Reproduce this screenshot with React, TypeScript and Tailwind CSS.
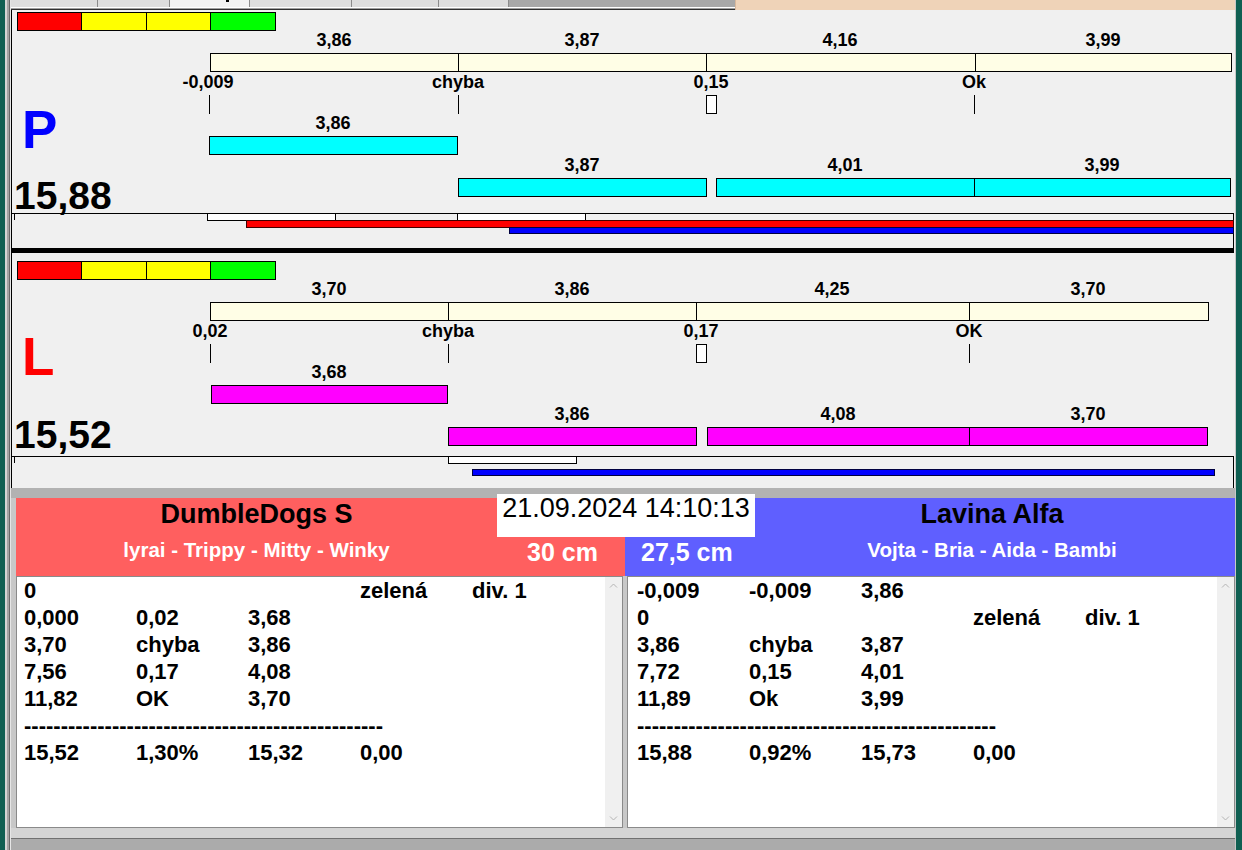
import React from 'react';

// page x of the chart canvas' left padding edge
const OX = 12;

type Rect = { x1: number; x2: number; y1: number; y2: number; cls: string };
type Lbl = { cx: number; cy: number; t: string };

const CREAM = 'bg-[#fffee6] border border-black';
const CYAN = 'bg-[#00ffff] border border-black';
const MAGENTA = 'bg-[#ff00ff] border border-black';
const LINE = 'bg-black';
const TICKBOX = 'bg-white border border-black';

const colourBar = (y1: number, y2: number): Rect[] => [
  { x1: 17, x2: 81, y1, y2, cls: 'bg-[#ff0000] border border-black' },
  { x1: 81, x2: 146, y1, y2, cls: 'bg-[#ffff00] border border-black' },
  { x1: 146, x2: 210, y1, y2, cls: 'bg-[#ffff00] border border-black' },
  { x1: 210, x2: 275, y1, y2, cls: 'bg-[#00ff00] border border-black' },
];

const pRects: Rect[] = [
  ...colourBar(12, 30),
  { x1: 210, x2: 458, y1: 53, y2: 71, cls: CREAM },
  { x1: 458, x2: 706, y1: 53, y2: 71, cls: CREAM },
  { x1: 706, x2: 975, y1: 53, y2: 71, cls: CREAM },
  { x1: 975, x2: 1231, y1: 53, y2: 71, cls: CREAM },
  { x1: 209, x2: 209, y1: 95, y2: 113, cls: LINE },
  { x1: 458, x2: 458, y1: 95, y2: 113, cls: LINE },
  { x1: 974, x2: 974, y1: 95, y2: 113, cls: LINE },
  { x1: 706, x2: 716, y1: 95, y2: 113, cls: TICKBOX },
  { x1: 209, x2: 457, y1: 136, y2: 154, cls: CYAN },
  { x1: 458, x2: 706, y1: 178, y2: 196, cls: CYAN },
  { x1: 716, x2: 974, y1: 178, y2: 196, cls: CYAN },
  { x1: 974, x2: 1230, y1: 178, y2: 196, cls: CYAN },
  // timeline box
  { x1: 12, x2: 1233, y1: 213, y2: 213, cls: LINE },
  { x1: 1233, x2: 1233, y1: 213, y2: 247, cls: LINE },
  { x1: 14, x2: 14, y1: 213, y2: 219, cls: LINE },
  { x1: 207, x2: 335, y1: 213, y2: 220, cls: TICKBOX },
  { x1: 457, x2: 585, y1: 213, y2: 220, cls: TICKBOX },
  { x1: 246, x2: 1233, y1: 220, y2: 227, cls: 'bg-[#ff0000] border border-[#400000]' },
  { x1: 509, x2: 1233, y1: 227, y2: 233, cls: 'bg-[#0000ff] border border-[#000040]' },
  { x1: 12, x2: 1233, y1: 248, y2: 252, cls: LINE },
];

const pLabels: Lbl[] = [
  { cx: 334, cy: 40, t: '3,86' },
  { cx: 582, cy: 40, t: '3,87' },
  { cx: 840, cy: 40, t: '4,16' },
  { cx: 1103, cy: 40, t: '3,99' },
  { cx: 208, cy: 82, t: '-0,009' },
  { cx: 458, cy: 82, t: 'chyba' },
  { cx: 711, cy: 82, t: '0,15' },
  { cx: 974, cy: 82, t: 'Ok' },
  { cx: 333, cy: 123, t: '3,86' },
  { cx: 582, cy: 165, t: '3,87' },
  { cx: 845, cy: 165, t: '4,01' },
  { cx: 1102, cy: 165, t: '3,99' },
];

const lRects: Rect[] = [
  ...colourBar(261, 279),
  { x1: 210, x2: 448, y1: 302, y2: 320, cls: CREAM },
  { x1: 448, x2: 696, y1: 302, y2: 320, cls: CREAM },
  { x1: 696, x2: 969, y1: 302, y2: 320, cls: CREAM },
  { x1: 969, x2: 1208, y1: 302, y2: 320, cls: CREAM },
  { x1: 210, x2: 210, y1: 344, y2: 362, cls: LINE },
  { x1: 448, x2: 448, y1: 344, y2: 362, cls: LINE },
  { x1: 969, x2: 969, y1: 344, y2: 362, cls: LINE },
  { x1: 696, x2: 706, y1: 344, y2: 362, cls: TICKBOX },
  { x1: 211, x2: 447, y1: 385, y2: 403, cls: MAGENTA },
  { x1: 448, x2: 696, y1: 427, y2: 445, cls: MAGENTA },
  { x1: 707, x2: 969, y1: 427, y2: 445, cls: MAGENTA },
  { x1: 969, x2: 1207, y1: 427, y2: 445, cls: MAGENTA },
  { x1: 12, x2: 1233, y1: 456, y2: 456, cls: LINE },
  { x1: 1233, x2: 1233, y1: 456, y2: 488, cls: LINE },
  { x1: 14, x2: 14, y1: 456, y2: 462, cls: LINE },
  { x1: 448, x2: 576, y1: 456, y2: 463, cls: TICKBOX },
  { x1: 472, x2: 1214, y1: 469, y2: 475, cls: 'bg-[#0000ff] border border-[#000040]' },
];

const lLabels: Lbl[] = [
  { cx: 329, cy: 289, t: '3,70' },
  { cx: 572, cy: 289, t: '3,86' },
  { cx: 832, cy: 289, t: '4,25' },
  { cx: 1088, cy: 289, t: '3,70' },
  { cx: 210, cy: 331, t: '0,02' },
  { cx: 448, cy: 331, t: 'chyba' },
  { cx: 701, cy: 331, t: '0,17' },
  { cx: 969, cy: 331, t: 'OK' },
  { cx: 329, cy: 372, t: '3,68' },
  { cx: 572, cy: 414, t: '3,86' },
  { cx: 838, cy: 414, t: '4,08' },
  { cx: 1088, cy: 414, t: '3,70' },
];

function Chart({ top, className, rects, labels, children }: {
  top: number;
  className: string;
  rects: Rect[];
  labels: Lbl[];
  children?: React.ReactNode;
}) {
  return (
    <div className={`relative ${className}`}>
      {rects.map((r, i) => (
        <div
          key={i}
          className={`absolute ${r.cls}`}
          style={{ left: r.x1 - OX, top: r.y1 - top, width: r.x2 - r.x1 + 1, height: r.y2 - r.y1 + 1 }}
        />
      ))}
      {labels.map((l, i) => (
        <div
          key={i}
          className="absolute -translate-x-1/2 whitespace-nowrap text-[18px] font-bold leading-none text-black"
          style={{ left: l.cx - OX, top: l.cy - top - 9 }}
        >
          {l.t}
        </div>
      ))}
      {children}
    </div>
  );
}

const DASHES = '-'.repeat(49);

const leftRows = [
  ['0', '', '', 'zelená', 'div. 1'],
  ['0,000', '0,02', '3,68'],
  ['3,70', 'chyba', '3,86'],
  ['7,56', '0,17', '4,08'],
  ['11,82', 'OK', '3,70'],
  [DASHES],
  ['15,52', '1,30%', '15,32', '0,00'],
];

const rightRows = [
  ['-0,009', '-0,009', '3,86'],
  ['0', '', '', 'zelená', 'div. 1'],
  ['3,86', 'chyba', '3,87'],
  ['7,72', '0,15', '4,01'],
  ['11,89', 'Ok', '3,99'],
  [DASHES],
  ['15,88', '0,92%', '15,73', '0,00'],
];

function Chevron({ up }: { up?: boolean }) {
  return (
    <svg width="9" height="5" viewBox="0 0 9 5" className="block">
      <polyline
        points={up ? '1,4.5 4.5,1 8,4.5' : '1,0.5 4.5,4 8,0.5'}
        fill="none"
        stroke="#b4b4b4"
        strokeWidth="1"
      />
    </svg>
  );
}

function ListBox({ rows, className }: { rows: string[][]; className: string }) {
  return (
    <div className={`flex bg-white border border-[#8a8a8a] ${className}`}>
      <div className="flex-1 text-[22px] font-bold leading-[27px] text-black">
        {rows.map((r, i) => (
          <div key={i} className="flex whitespace-nowrap h-[27px]">
            {r.length === 1 ? (
              <span>{r[0]}</span>
            ) : (
              r.map((c, j) => (
                <span key={j} className="w-[112px] shrink-0">
                  {c}
                </span>
              ))
            )}
          </div>
        ))}
      </div>
      <div className="w-[17px] bg-[#f0f0f0] flex flex-col items-center justify-between pt-[6px] pb-[6px]">
        <Chevron up />
        <Chevron />
      </div>
    </div>
  );
}

function LeftEdge() {
  return (
    <div className="flex h-full shrink-0">
      <div className="w-[5px] bg-[#0f5f52]" />
      <div className="w-[2px] bg-[#d4d4d4]" />
      <div className="w-[2px] bg-[#a2a2a2]" />
      <div className="w-[1px] bg-[#6a6a6a]" />
      <div className="w-[1px] bg-[#e6e6e6]" />
    </div>
  );
}

function TopStrip() {
  return (
    <div className="h-[10px] flex shrink-0">
      <div className="w-[724px] flex flex-col">
        <div className="h-[7px] flex bg-[#a8a8a8]">
          <div className="w-[87px] bg-[#dedede] border-r border-[#8c8c8c]" />
          <div className="w-[72px] bg-[#dedede] border-r border-[#8c8c8c]" />
          <div className="relative w-[80px] bg-[#f2f2f2] border-r border-[#8c8c8c]">
            <div className="absolute left-[56px] top-0 w-[3px] h-[2px] bg-black" />
          </div>
          <div className="w-[102px] bg-[#dedede] border-r border-[#8c8c8c]" />
          <div className="w-[87px] bg-[#dedede] border-r border-[#8c8c8c]" />
          <div className="w-[70px] bg-[#dedede] border-r border-[#8c8c8c]" />
        </div>
        <div className="h-[1px] bg-white" />
        <div className="h-[1px] bg-[#a0a0a0]" />
        <div className="h-[1px] bg-[#303030]" />
      </div>
      <div className="flex-1 bg-[#efd3b8] border-l border-[#d8b89c]" />
    </div>
  );
}

export default function App() {
  return (
    <div className="w-[1242px] h-[850px] flex overflow-hidden bg-[#c8c8c8] font-['Liberation_Sans',Arial,sans-serif]">
      <LeftEdge />

      <div className="w-[1224px] flex flex-col shrink-0">
        <TopStrip />

        {/* chart area */}
        <div className="h-[478px] flex flex-col bg-[#f0f0f0] border-l border-black shrink-0">
          <Chart top={10} className="h-[243px] shrink-0" rects={pRects} labels={pLabels}>
            <div className="absolute left-[10px] top-[93px] text-[53px] font-bold leading-none text-[#0000ff]">P</div>
            <div className="absolute left-[2px] top-[166px] text-[39px] font-bold leading-none text-black">15,88</div>
          </Chart>
          <Chart top={253} className="h-[235px] shrink-0" rects={lRects} labels={lLabels}>
            <div className="absolute left-[10px] top-[77px] text-[53px] font-bold leading-none text-[#ff0000]">L</div>
            <div className="absolute left-[2px] top-[162px] text-[39px] font-bold leading-none text-black">15,52</div>
          </Chart>
        </div>

        {/* results area */}
        <div className="relative flex-1 flex flex-col">
          <div className="h-[10px] bg-[#b2b2b2] shrink-0" />
          <div className="pl-[5px] flex flex-col bg-[#c8c8c8] shrink-0">
            <div className="h-[78px] flex">
              <div className="w-[609px] flex bg-[#ff5f5f]">
                <div className="w-[481px] flex flex-col items-center">
                  <div className="h-[32px] leading-[32px] text-[27px] font-bold text-black">DumbleDogs S</div>
                  <div className="mt-[7px] h-[25px] leading-[25px] text-[20.5px] font-bold text-white">
                    lyrai - Trippy - Mitty - Winky
                  </div>
                </div>
                <div className="flex-1 pt-[42px] pr-[27px] text-right">
                  <div className="leading-[25px] text-[25px] font-bold text-white">30 cm</div>
                </div>
              </div>
              <div className="flex-1 flex bg-[#5f5fff]">
                <div className="w-[130px] pt-[42px] pl-[16px]">
                  <div className="leading-[25px] text-[25px] font-bold text-white whitespace-nowrap">27,5 cm</div>
                </div>
                <div className="flex-1 pr-[6px] flex flex-col items-center">
                  <div className="h-[32px] leading-[32px] text-[27px] font-bold text-black">Lavina Alfa</div>
                  <div className="mt-[7px] h-[25px] leading-[25px] text-[20.5px] font-bold text-white">
                    Vojta - Bria - Aida - Bambi
                  </div>
                </div>
              </div>
            </div>
            <div className="h-[252px] flex gap-[4px]">
              <ListBox rows={leftRows} className="w-[607px] pl-[7px]" />
              <ListBox rows={rightRows} className="w-[608px] pl-[9px]" />
            </div>
          </div>
          <div className="h-[10px] bg-[#d4d4d4] shrink-0" />
          <div className="h-[1px] bg-[#707070] shrink-0" />
          <div className="flex-1 bg-[#ababab]" />

          {/* timestamp box over both headers */}
          <div className="absolute left-[486px] top-[6px] w-[258px] h-[43px] bg-white text-center text-[27px] leading-[28px] text-black whitespace-nowrap">
            21.09.2024 14:10:13
          </div>
        </div>
      </div>

      <div className="flex-1 flex">
        <div className="w-[1px] bg-[#c8c8c8]" />
        <div className="flex-1 bg-[#0f5f52]" />
      </div>
    </div>
  );
}
